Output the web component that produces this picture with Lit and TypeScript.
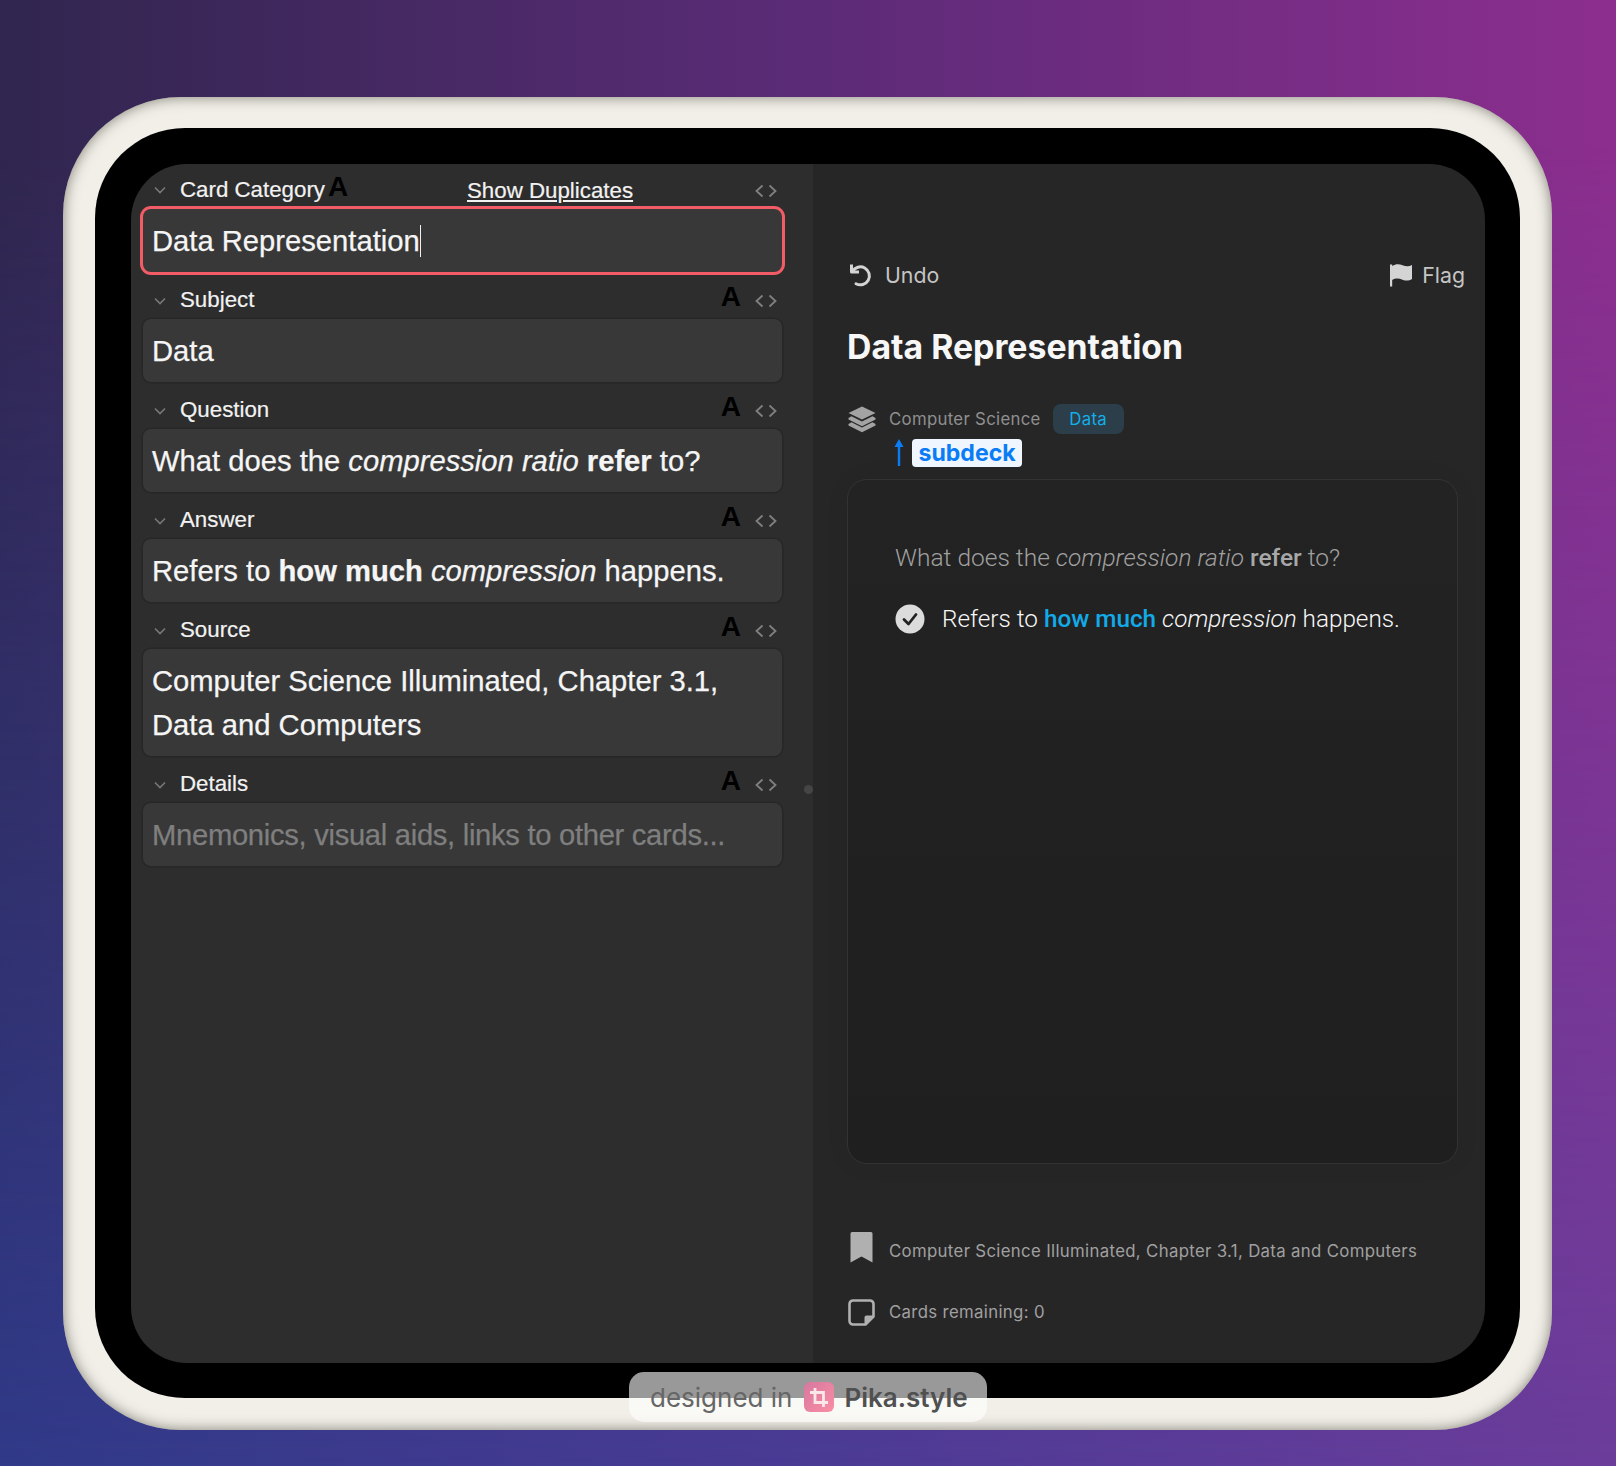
import { LitElement, html, css, svg } from 'lit'
import { customElement } from 'lit/decorators.js'

type Field = { label: string; body: unknown; active?: boolean; placeholder?: boolean }

const chevron = html`<svg class="chev" viewBox="0 0 14 14"><path d="M2 4.5 7 9.5 12 4.5" /></svg>`
const code = html`<svg class="code" viewBox="0 0 22 14"><path d="M7.5 1.5 1.5 7 7.5 12.5M14.5 1.5 20.5 7 14.5 12.5" /></svg>`

const fields: Field[] = [
  { label: 'Card Category', active: true, body: html`Data Representation<span class="caret"></span>` },
  { label: 'Subject', body: html`Data` },
  { label: 'Question', body: html`What does the <em>compression ratio</em> <b>refer</b> to?` },
  { label: 'Answer', body: html`Refers to <b>how much</b> <em>compression</em> happens.` },
  { label: 'Source', body: html`Computer Science Illuminated, Chapter 3.1,<br />Data and Computers` },
  { label: 'Details', placeholder: true, body: html`Mnemonics, visual aids, links to other cards...` },
]

const undoIcon = svg`<path d="M4.500 2.500v7.500h7.500" fill="none" stroke="currentColor" stroke-width="3" stroke-linejoin="round" /><path d="M5.500 9.500A9 9 0 1 1 9 21.700" fill="none" stroke="currentColor" stroke-width="3" stroke-linecap="round" />`
const flagIcon = svg`<path fill="currentColor" d="M1 1.500h2.200v22H1zM3.200 3C7 .6 10.500 1.200 13.500 2.300c3.500 1.300 6.500 1.500 9.500-.3v14c-3 1.800-6 2-9.500.7-3.500-1.300-6.500-2-10.300.3z" />`
const layersIcon = svg`<path fill="currentColor" d="M14 0 27.500 6.500 14 13 .5 6.500zM3.500 9.800 14 15l10.500-5.200 3 1.700V13L14 19.800.5 13V11.500zM3.500 15.800 14 21l10.500-5.200 3 1.700V19L14 25.800.5 19V17.500z" />`
const bookmarkIcon = svg`<path fill="currentColor" d="M2 0h19a1.500 1.500 0 0 1 1.500 1.500V30.500L11.500 24.500.5 30.500V1.500A1.500 1.500 0 0 1 2 0z" />`
const noteIcon = svg`<path fill="none" stroke="currentColor" stroke-width="2.600" stroke-linejoin="round" d="M5 1.500h17A3.500 3.500 0 0 1 25.500 5v12.500L17.500 25.500H5A3.500 3.500 0 0 1 1.500 22V5A3.500 3.500 0 0 1 5 1.500z" /><path fill="currentColor" d="M25.500 16.500h-7a2 2 0 0 0-2 2v7z" />`

@customElement('app-root')
export class AppRoot extends LitElement {
  static styles = css`
    :host {
      display: block;
      position: relative;
      width: 1616px;
      height: 1466px;
      overflow: hidden;
      background: linear-gradient(90deg, #303a88 0%, #4a3b95 50%, #6c3d9b 100%);
      font-family: 'Liberation Sans', Arial, sans-serif;
    }
    .top-wash {
      position: absolute;
      inset: 0;
      background: linear-gradient(90deg, #30264e 0%, #5b2b77 50%, #8c2e8e 100%);
      -webkit-mask-image: linear-gradient(180deg, #000 0%, #000 10%, transparent 100%);
      mask-image: linear-gradient(180deg, #000 0%, #000 10%, transparent 100%);
    }
    .stage {
      position: relative;
      padding: 97px 64px 36px 63px;
      height: 100%;
      box-sizing: border-box;
    }
    .bezel {
      height: 100%;
      box-sizing: border-box;
      padding: 31px 32px 32px;
      border-radius: 118px;
      background: #f1efe8;
      box-shadow: inset 0 0 14px rgba(80, 78, 66, 0.7);
    }
    .black {
      height: 100%;
      box-sizing: border-box;
      padding: 36px 35px 35px 36px;
      border-radius: 90px;
      background: #000;
    }
    .screen {
      height: 100%;
      display: grid;
      grid-template-columns: 682px 1fr;
      border-radius: 56px;
      overflow: hidden;
      position: relative;
    }

    /* left pane */
    .editor {
      background: #2d2d2d;
      padding: 0 31px 0 12px;
    }
    .head {
      display: flex;
      align-items: center;
      height: 47px;
      padding: 0 5px 0 10px;
      color: #f2f2f2;
      font-size: 22.300px;
      -webkit-text-stroke: 0.2px #f2f2f2;
      position: relative;
    }
    .field:first-child .head {
      height: 45px;
    }
    .chev {
      width: 14px;
      height: 14px;
      margin-right: 13px;
      fill: none;
      stroke: #787878;
      stroke-width: 1.6;
      position: relative;
      top: 5px;
    }
    .field:first-child .chev {
      top: 3px;
    }
    .name {
      flex: 1;
      position: relative;
      top: 4px;
    }
    .field:first-child .name {
      top: 3px;
    }
    .glyph {
      color: #000;
      font-weight: 700;
      font-size: 28px;
      line-height: 1;
      margin-right: 14px;
      position: relative;
      top: 1px;
      -webkit-text-stroke: 0;
    }
    .code {
      width: 22px;
      height: 14px;
      fill: none;
      stroke: #808080;
      stroke-width: 1.8;
      position: relative;
      top: 5px;
    }
    .field:first-child .glyph {
      position: absolute;
      left: 185px;
      top: 9px;
      margin: 0;
    }
    .dupes {
      position: absolute;
      left: 324px;
      top: 14px;
      text-decoration: underline;
      line-height: 25px;
    }
    .field:first-child .code {
      top: 4px;
    }
    .input {
      background: #383838;
      border-radius: 8px;
      padding: 9.5px 9px;
      font-size: 29.200px;
      line-height: 44px;
      color: #f5f5f5;
      -webkit-text-stroke: 0.25px currentColor;
      box-shadow: 0 0 0 1.500px #272727;
    }
    .input em {
      font-style: italic;
    }
    .input.active {
      box-shadow: 0 0 0 3px #f25c67;
    }
    .input.placeholder {
      color: #7f7f7f;
      letter-spacing: -0.3px;
    }
    .caret {
      display: inline-block;
      width: 1.500px;
      height: 32px;
      background: #f0f0f0;
      vertical-align: -6px;
    }
    .grip {
      position: absolute;
      left: 673px;
      top: 621px;
      width: 9px;
      height: 9px;
      border-radius: 50%;
      background: #454545;
    }

    /* right pane */
    .review {
      background: #272627;
      padding: 91px 27px 0 34px;
      font-family: Inter, 'Liberation Sans', sans-serif;
      color: #c9c9c9;
    }
    .actions {
      display: flex;
      justify-content: space-between;
      height: 40px;
      margin-right: -7px;
      align-items: center;
      font-size: 21.300px;
    }
    .action {
      display: flex;
      align-items: center;
      color: #c4c4c4;
    }
    .action svg {
      color: #d4d4d4;
    }
    .undo {
      width: 26px;
      height: 26px;
      margin-right: 12px;
    }
    .flag {
      width: 24px;
      height: 24px;
      margin-right: 9px;
    }
    h1 {
      margin: 32px 0 0;
      font-size: 33.800px;
      line-height: 40px;
      font-weight: 700;
      color: #f7f7f7;
    }
    .deck {
      display: flex;
      align-items: center;
      height: 30px;
      margin-top: 37px;
      color: #8f8f8f;
      font-size: 16.800px;
      letter-spacing: 0.3px;
    }
    .deck svg {
      width: 28px;
      height: 27px;
      margin: 0 13px 0 1px;
      color: #a3a3a3;
    }
    .tag {
      margin-left: 12px;
      width: 71px;
      height: 30px;
      line-height: 30px;
      text-align: center;
      border-radius: 8px;
      background: #2b3e4a;
      color: #14aee8;
    }
    .sub {
      display: flex;
      align-items: center;
      height: 30px;
      margin-top: 3px;
      padding-left: 46px;
    }
    .arrow {
      width: 12px;
      height: 28px;
      margin-right: 7px;
    }
    .sub span {
      height: 28px;
      line-height: 28px;
      padding: 0 6.500px;
      border-radius: 4px;
      background: #eff6ff;
      color: #0a7cf5;
      font-size: 23.100px;
      font-weight: 700;
      position: relative;
      top: 1px;
    }
    .card {
      margin-top: 12px;
      height: 685px;
      box-sizing: border-box;
      padding: 62px 47px 0;
      border: 1.500px solid #333;
      border-radius: 20px;
      background: linear-gradient(180deg, #232323 0%, #202020 60%, #1f1f1f 100%);
      box-shadow: 0 0 24px rgba(0, 0, 0, 0.06);
      font-family: Roboto, 'Liberation Sans', sans-serif;
    }
    .q {
      font-size: 24.500px;
      line-height: 32px;
      color: #a0a0a0;
      font-weight: 300;
    }
    .q b {
      font-weight: 500;
      color: #a8a8a8;
    }
    .a {
      display: flex;
      align-items: center;
      margin-top: 29px;
      font-size: 24.300px;
      line-height: 32px;
      font-weight: 300;
      color: #f7f7f7;
    }
    .a svg {
      width: 30px;
      height: 30px;
      margin-right: 17px;
    }
    .a b {
      font-weight: 500;
      color: #12aae8;
    }
    .meta {
      display: flex;
      align-items: center;
      height: 38px;
      font-size: 16.800px;
      letter-spacing: 0.33px;
      color: #a0a0a0;
    }
    .meta.first {
      margin-top: 68px;
    }
    .meta.second {
      margin-top: 23px;
    }
    .meta svg {
      width: 27px;
      height: 31px;
      margin: 0 14px 0 1px;
      flex: none;
      color: #b0b0b0;
    }
    .meta.first svg {
      margin: 0 12px 8px 3px;
    }

    /* watermark */
    .mark {
      position: absolute;
      left: 629px;
      top: 1372px;
      width: 358px;
      height: 50px;
      box-sizing: border-box;
      display: flex;
      align-items: center;
      padding-left: 21px;
      border-radius: 15px;
      background: rgba(255, 255, 255, 0.6);
      font-family: Inter, 'Liberation Sans', sans-serif;
      font-size: 26px;
      color: #666;
    }
    .mark svg {
      width: 30px;
      height: 30px;
      margin: 0 10px 0 12px;
    }
    .mark b {
      font-weight: 600;
      color: #505050;
    }
  `

  render() {
    return html`
      <div class="top-wash"></div>
      <div class="stage">
        <div class="bezel">
          <div class="black">
            <div class="screen">
              <section class="editor">
                ${fields.map(
                  (f) => html`
                    <div class="field">
                      <div class="head">
                        ${chevron}
                        <span class="name">${f.label}</span>
                        ${f.active ? html`<span class="dupes">Show Duplicates</span>` : ''}
                        <span class="glyph">A</span>
                        ${code}
                      </div>
                      <div class="input ${f.active ? 'active' : ''} ${f.placeholder ? 'placeholder' : ''}">${f.body}</div>
                    </div>
                  `,
                )}
              </section>
              <section class="review">
                <div class="actions">
                  <div class="action"><svg class="undo" viewBox="0 0 26 26">${undoIcon}</svg>Undo</div>
                  <div class="action"><svg class="flag" viewBox="0 0 24 24">${flagIcon}</svg>Flag</div>
                </div>
                <h1>Data Representation</h1>
                <div class="deck">
                  <svg viewBox="0 0 28 26">${layersIcon}</svg>Computer Science<span class="tag">Data</span>
                </div>
                <div class="sub">
                  <svg class="arrow" viewBox="0 0 12 28"><path fill="#0a7cf5" d="M6 1 10.500 9H7.200V28H4.800V9H1.500z" /></svg>
                  <span>subdeck</span>
                </div>
                <div class="card">
                  <div class="q">What does the <em>compression ratio</em> <b>refer</b> to?</div>
                  <div class="a">
                    <svg viewBox="0 0 30 30">
                      <circle cx="15" cy="15" r="14.500" fill="#dcdcdc" />
                      <path d="M9 15.500 13.500 20 21 10.500" fill="none" stroke="#222" stroke-width="2.800" stroke-linecap="round" stroke-linejoin="round" />
                    </svg>
                    <span>Refers to <b>how much</b> <em>compression</em> happens.</span>
                  </div>
                </div>
                <div class="meta first">
                  <svg viewBox="0 0 27 31">${bookmarkIcon}</svg>Computer Science Illuminated, Chapter 3.1, Data and Computers
                </div>
                <div class="meta second"><svg viewBox="0 0 27 27">${noteIcon}</svg>Cards remaining: 0</div>
              </section>
              <div class="grip"></div>
            </div>
          </div>
        </div>
      </div>
      <div class="mark">
        designed in
        <svg viewBox="0 0 30 30">
          <defs>
            <linearGradient id="pika" x1="0" y1="0" x2="1" y2="1">
              <stop offset="0" stop-color="#d5789f" />
              <stop offset="1" stop-color="#fb8ea4" />
            </linearGradient>
          </defs>
          <rect width="30" height="30" rx="6" fill="url(#pika)" />
          <path d="M11 6v14.500h13M6 10.500h13.500V25" fill="none" stroke="#fbe6ea" stroke-width="2.800" />
        </svg>
        <b>Pika.style</b>
      </div>
    `
  }
}

declare global {
  interface HTMLElementTagNameMap {
    'app-root': AppRoot
  }
}
